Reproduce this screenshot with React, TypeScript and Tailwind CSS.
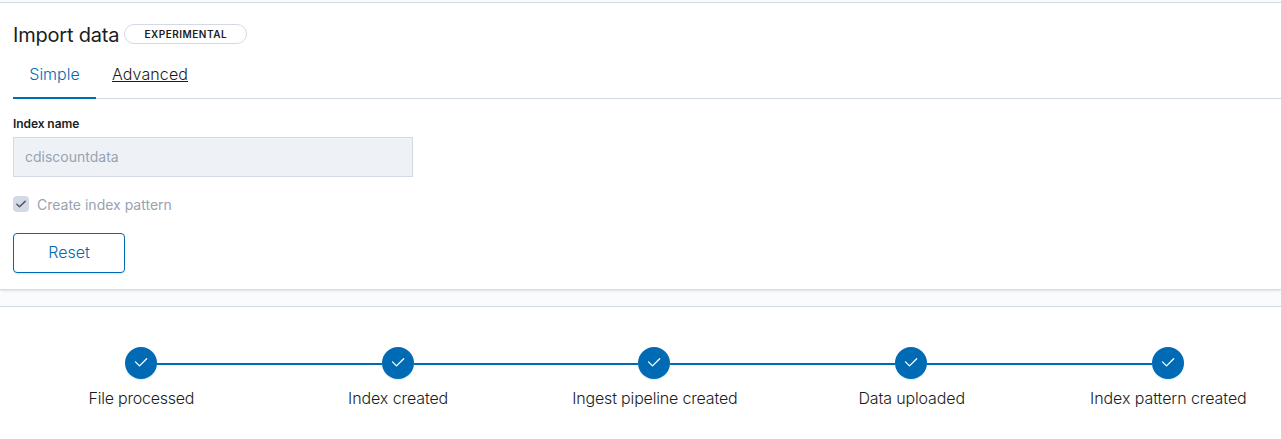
const steps = [
  { label: "File processed", spacing: "tracking-[-0.24px]" },
  { label: "Index created", spacing: "tracking-[-0.1px]" },
  { label: "Ingest pipeline created", spacing: "tracking-[-0.17px]" },
  { label: "Data uploaded", spacing: "tracking-[-0.13px]" },
  { label: "Index pattern created", spacing: "tracking-[-0.07px]" },
];

function Step({ label, spacing, first, last }: { label: string; spacing: string; first: boolean; last: boolean }) {
  return (
    <li className="flex w-[256.75px] shrink-0 flex-col items-center">
      <div className="flex w-full items-center">
        <div className={first ? "mt-0.5 h-0.5 flex-1" : "mt-0.5 h-0.5 flex-1 bg-[#006bb4]"} />
        <div className="flex size-8 items-center justify-center rounded-full bg-[#006bb4] pb-0.5 shadow-[0_1px_1px_rgba(0,107,180,0.15)]">
          <svg width="16" height="16" viewBox="0 0 16 16" fill="none" stroke="#fff" strokeWidth="1.3" strokeLinecap="round" strokeLinejoin="round">
            <path d="M2.5 7.9 6.5 11.9 13.7 4.7" />
          </svg>
        </div>
        <div className={last ? "mt-0.5 h-0.5 flex-1" : "mt-0.5 h-0.5 flex-1 bg-[#006bb4]"} />
      </div>
      <span className={`mt-[7px] pl-px text-base leading-6 font-light ${spacing}`}>{label}</span>
    </li>
  );
}

export default function App() {
  return (
    <div className="h-[439px] overflow-hidden bg-[#fafbfd] pt-0.5 font-['Inter',sans-serif] text-[#1a1c21]">
      <section className="h-[288px] border-y border-[#d3dae6] bg-white pt-4 pl-[13px] shadow-[0_2px_2px_-1px_rgba(152,162,179,0.3)]">
        <div className="flex h-8 items-center">
          <h1 className="text-xl leading-8 font-normal tracking-[-0.2px]">Import data</h1>
          <span className="mb-0.5 ml-[5px] flex h-5 w-[123px] items-center justify-center rounded-full border border-[#d3dae6] text-[10px] font-semibold tracking-[0.5px]">EXPERIMENTAL</span>
        </div>
        <div className="flex h-12 border-b border-[#d3dae6]">
          <button className="-mb-px flex w-[83px] items-center justify-center border-b-2 border-[#006bb4] font-light text-[#006bb4]">Simple</button>
          <button className="ml-4 pb-0.5 font-light tracking-[0.1px] underline">Advanced</button>
        </div>
        <label className="mt-4 block text-xs leading-[18px] font-semibold tracking-[-0.08px]">Index name</label>
        <input disabled value="cdiscountdata" readOnly className="mt-1 block h-10 w-[400px] border border-[#d3dae6] bg-[#eef2f7] px-[11px] pb-0.5 text-sm text-[#98a2b3]" />
        <div className="mt-[18px] flex h-5 items-center gap-2 text-sm text-[#98a2b3]">
          <span className="mb-0.5 flex size-4 items-center justify-center rounded bg-[#d3dae6]">
            <svg width="10" height="8" viewBox="0 0 10 8" fill="none" stroke="#535966" strokeWidth="1.5" strokeLinecap="round" strokeLinejoin="round"><path d="M.9 4.2 3.6 6.8 9.1 1.4" /></svg>
          </span>
          Create index pattern
        </div>
        <button className="mt-[18px] flex h-10 w-28 items-center justify-center rounded border border-[#006bb4] pb-0.5 font-light text-[#006bb4] shadow-[0_2px_2px_-1px_rgba(54,97,126,0.2)]">Reset</button>
      </section>
      <section className="mt-4 h-[160px] border-t border-[#d3dae6] bg-white pt-10">
        <ol className="ml-[12.525px] flex">
          {steps.map((s, i) => <Step key={s.label} {...s} first={i === 0} last={i === steps.length - 1} />)}
        </ol>
      </section>
    </div>
  );
}
